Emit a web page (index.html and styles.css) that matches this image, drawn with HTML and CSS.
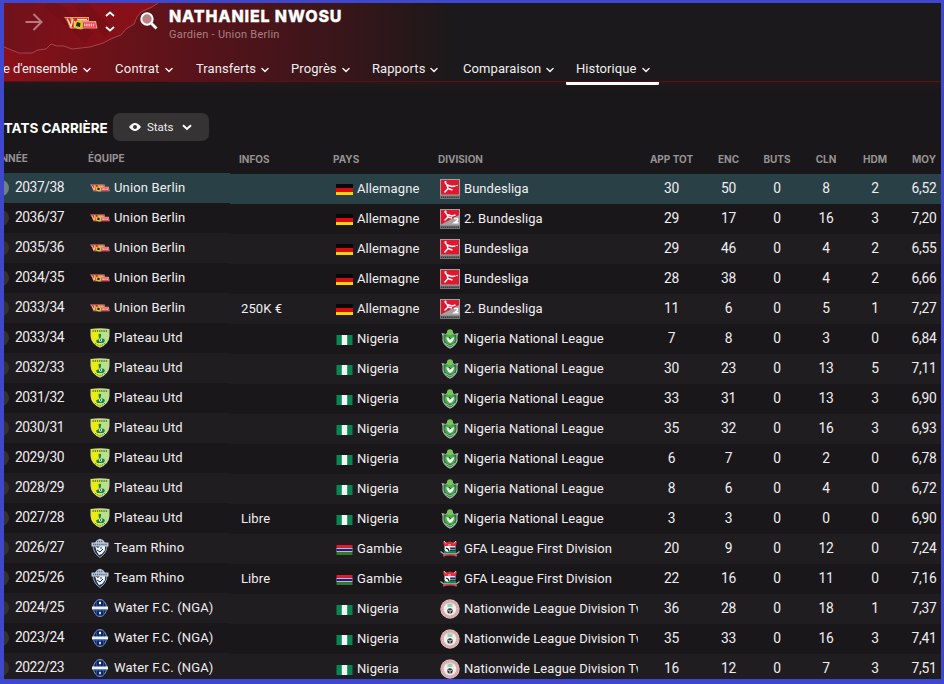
FILE: index.html
```
<!DOCTYPE html>
<html lang="fr">
<head>
<meta charset="utf-8">
<title>Nathaniel Nwosu</title>
<link rel="stylesheet" href="styles.css">
</head>
<body>
<svg class="defs" aria-hidden="true">
  <symbol id="chev" viewBox="0 0 8 6"><path d="M1 1.500 4 4.500 7 1.500" fill="none" stroke="currentColor" stroke-width="1.500" stroke-linecap="round"/></symbol>
  <symbol id="union" viewBox="0 0 34 16">
    <path d="M0 2H25V6H32L33.500 13.500H20L17 14.500 12 13.500H6L3 6Z" fill="#dba078"/>
    <path d="M1 3H6L7.500 8 9 3H24V5H15L11 12.500H6.500Z" fill="#dc2029"/>
    <path d="M3 3.500 7 11.500 9 4M10.500 6V12.500M13 4.500H23" stroke="#ffe6a0" stroke-width="1.500" fill="none"/>
    <circle cx="14.500" cy="9.500" r="4.200" fill="#d8cf21"/><path d="M13 7 16.500 8 16 12 12 11Z" fill="#26270d"/>
    <path d="M19 7.500H31L32 12.500H19Z" fill="#ef2a45"/><path d="M20 10H31" stroke="#ffc3cb" stroke-width="3" stroke-dasharray="1.500 .7"/>
  </symbol>
  <symbol id="plateau" viewBox="0 0 20 20">
    <path d="M.500 1Q10-.500 19.500 1V8Q19 16 10 19.700 1 16 .500 8Z" fill="#c9d4a0"/>
    <path d="M1.200 1.500H10V19Q2 16 1.200 8Z" fill="#ecea10"/>
    <path d="M10 1.500H18.800V8Q18 16 10 19Z" fill="#b9e08c"/>
    <path d="M2.500 3H18" stroke="#5c8430" stroke-width="1.800" stroke-dasharray="1.200 1"/>
    <path d="M8.500 6Q12 5 11 8L10.500 10 14 11Q16 13 13 15L7 15 6 12.500 9 11Z" fill="#118545"/>
    <circle cx="10.500" cy="12" r="1.700" fill="#fff"/><circle cx="10.500" cy="12" r=".8" fill="#111"/>
    <path d="M5 15.500 10 18 15 15.500" fill="none" stroke="#55772c" stroke-width="1" stroke-dasharray="1 1"/>
  </symbol>
  <symbol id="rhino" viewBox="0 0 20 20">
    <path d="M3 7H17Q17 15 10 19.500 3 15 3 7Z" fill="#1f3157" stroke="#a9b3bf" stroke-width=".9"/>
    <path d="M5 8 8 10 10 8 15 8 15 12 12 16 9 17 7 14Z" fill="#f4f7fa"/><path d="M7 12 10 14 13 11M11 9V11" stroke="#1b2c50" fill="none"/>
    <path d="M1.500 4.500H5L7 2 10 .700 13 2 15 4.500H18.500V8.500H1.500Z" fill="#bdcbd8"/><path d="M3 6.500H17M7 3.500H13" stroke="#536a86" stroke-width="1.300" stroke-dasharray="1.200 .7"/>
  </symbol>
  <symbol id="water" viewBox="0 0 20 20">
    <ellipse cx="10" cy="10" rx="6.500" ry="8.500" fill="#0d2254" stroke="#7c9bd9"/><path d="M10 2V18M6 4Q9 10 6 16M14 4Q11 10 14 16" stroke="#3059b2" fill="none"/>
    <circle cx="10" cy="5" r="1.200" fill="#fff"/><circle cx="10" cy="15" r="1.200" fill="#c5d5f5"/>
    <path d="M2 8.500H18V11.500H2Z" fill="#eef3f8"/><path d="M3 12H17" stroke="#4169b9"/>
  </symbol>
  <symbol id="bl" viewBox="0 0 20 20">
    <path d="M0 0H20V20H0Z" fill="#a3a1a2"/><path d="M1 1H19V15.500H1Z" fill="#e0182f"/>
    <path d="M5 3.500 7 6 12 7.500 15.500 7M7 6 8 9.500 4.500 13.500M8 9.500 12.500 11" fill="none" stroke="#fff" stroke-width="1.500"/><circle cx="5.500" cy="3" r="1.100" fill="#fff"/><circle cx="17" cy="6.500" r=".8" fill="#fff"/>
    <path d="M0 16.500H20V20H0Z" fill="#77797b"/><path d="M1 18.200H19" stroke="#333" stroke-width="1.500" stroke-dasharray="1.200 .7"/>
  </symbol>
  <symbol id="bl2" viewBox="0 0 20 20">
    <path d="M0 0H20V20H0Z" fill="#a3a1a2"/><path d="M1 1H19V6L1 15.500Z" fill="#e0182f"/>
    <path d="M5 3 7 5.500 12 7 15.500 6M7 5.500 8 8 4.500 11.500M8 8 12 9" fill="none" stroke="#fff" stroke-width="1.400"/><circle cx="5.500" cy="2.700" r="1.100" fill="#fff"/>
    <path d="M14 9.500H17.500V11.500L14.500 13.700H18.500" fill="none" stroke="#fff" stroke-width="1.600"/>
    <path d="M0 16.500H20V20H0Z" fill="#77797b"/><path d="M1 18.200H19" stroke="#333" stroke-width="1.500" stroke-dasharray="1.200 .7"/>
  </symbol>
  <symbol id="nnl" viewBox="0 0 20 20">
    <path d="M1.500 4 6 5 8 2H12L14 5 18.500 4 17.500 7V12Q16 17 10 19.700 4 17 2.500 12V7Z" fill="#b4bfb6"/>
    <path d="M3.500 5.500H16.500V11Q16 16 10 18.500 4 16 3.500 11Z" fill="#287b3b"/><circle cx="10" cy="10" r="5.300" fill="#4caa4c"/>
    <path d="M6.500 8 9 9 9.500 11 12 9 14 8Q14 13 10 14 6.500 12 6.500 8Z" fill="#eef9ee"/><path d="M9 8 11 10" stroke="#245a30"/><circle cx="10" cy="3.200" r="3" fill="#78c45a"/><path d="M5 14.500 10 17 15 14.500" fill="none" stroke="#b7dbb9" stroke-width=".8"/>
  </symbol>
  <symbol id="gfa" viewBox="0 0 20 20">
    <path d="M3 2.500 7 3.500 10 2.500 13 3.500 17 2.500 16 7H4Z" fill="#e12d3d"/><path d="M4 2 6 4.500M16 2 14 4.500M8 6H11" stroke="#f3c9cc"/><path d="M4.500 7H15.500V11H4.500Z" fill="#dce2e8"/><path d="M8 9.500H15.500" stroke="#242d67" stroke-width="2"/>
    <path d="M4 11.500H16V15H4Z" fill="#168255"/><circle cx="7.500" cy="10" r="2.700" fill="#fff"/><path d="M6 9 8 10 9 12" stroke="#111" stroke-width="1.200" fill="none"/>
    <path d="M.500 12.500 4 15H16L19.500 12.500" fill="none" stroke="#9fb5ab" stroke-width="1.300"/><path d="M3 17Q10 14.500 17 17" fill="none" stroke="#df3b4b" stroke-width="1.700"/>
  </symbol>
  <symbol id="nwl" viewBox="0 0 20 20">
    <circle cx="10" cy="10" r="9.700" fill="#d9c3c1"/><circle cx="10" cy="10" r="7.800" fill="none" stroke="#dba4a5" stroke-width="2.600" stroke-dasharray="1.600 .7"/><circle cx="10" cy="10" r="6.200" fill="#f0efed"/>
    <path d="M7.500 4.500H12.500V8H7.500Z" fill="#9fd0b5"/><circle cx="10" cy="12" r="2.700" fill="#333"/><path d="M8 11 10 12 12 11M10 12V15" stroke="#eee" stroke-width=".8" fill="none"/>
  </symbol>
  <symbol id="de" viewBox="0 0 17 12"><path d="M0 0H17V4H0Z" fill="#090909"/><path d="M0 4H17V8H0Z" fill="#dc0910"/><path d="M0 8H17V11H0Z" fill="#ffd008"/></symbol>
  <symbol id="ng" viewBox="0 0 17 12"><path d="M.500 1H16.500V11H.500Z" fill="#078653"/><path d="M5.800 1H11.200V11H5.800Z" fill="#f3f6f5"/></symbol>
  <symbol id="gm" viewBox="0 0 17 12"><path d="M.500 1H16.500V4.300H.500Z" fill="#d51f35"/><path d="M.500 4H16.500V8H.500Z" fill="#b9b8d5"/><path d="M.500 5H16.500V7H.500Z" fill="#1b2184"/><path d="M.500 8H16.500V11H.500Z" fill="#37772a"/></symbol>
</svg>
<div class="app">
  <header class="top">
    <svg class="crest-bg" viewBox="0 0 200 60">
      <defs><linearGradient id="g" x1="0" x2="1"><stop offset="0" stop-color="#6f121b"/><stop offset=".55" stop-color="#830f18"/><stop offset="1" stop-color="#8a1019"/></linearGradient></defs>
      <path d="M0 0H154L148 4 137 9 133 14 130 21 122 26 117 32 109 35 99 40 86 44 68 46 60 43 53 43 47 41 42 46 34 47 28 50 15 50 0 44Z" fill="url(#g)"/>
      <path d="M45 0 85 35M75 0 105 30" stroke="#620e18" stroke-opacity=".3" stroke-width="12"/>
      <path d="M154 0 148 4 137 9 133 14 130 21 122 26 117 32 109 35 99 40 86 44 68 46 60 43 53 43 47 41 42 46 34 47 28 50 15 50 0 44" fill="none" stroke="#b4575b" stroke-opacity=".75"/>
    </svg>
    <div class="bar">
      <svg class="arrow" viewBox="0 0 18 18"><path d="M.5 9H16M8.500 1 16.500 9 8.500 17" fill="none" stroke="#b77b7d" stroke-width="2"/></svg>
      <svg class="club"><use href="#union"/></svg>
      <svg class="updown" viewBox="0 0 10 21"><path d="M1 5 5 1.500 9 5M1 16 5 19.500 9 16" fill="none" stroke="#fff" stroke-width="1.800"/></svg>
      <svg class="search" viewBox="0 0 18 18"><circle cx="7" cy="7" r="5.700" fill="#b98184" stroke="#fff" stroke-width="2"/><path d="M11.500 11.500 16.500 16.500" stroke="#fff" stroke-width="2.800"/></svg>
      <div class="who"><h1>NATHANIEL NWOSU</h1><p>Gardien - Union Berlin</p></div>
    </div>
    <nav class="tabs">
      <a class="t1">e d'ensemble<svg><use href="#chev"/></svg></a>
      <a class="t2">Contrat<svg><use href="#chev"/></svg></a>
      <a class="t3">Transferts<svg><use href="#chev"/></svg></a>
      <a class="t4">Progrès<svg><use href="#chev"/></svg></a>
      <a class="t5">Rapports<svg><use href="#chev"/></svg></a>
      <a class="t6">Comparaison<svg><use href="#chev"/></svg></a>
      <a class="t7">Historique<svg><use href="#chev"/></svg></a>
    </nav>
  </header>
  <div class="section">
    <h2>STATS CARRIÈRE</h2>
    <button><svg class="eye" viewBox="0 0 12 8"><path d="M0 4Q6-4 12 4 6 12 0 4Z" fill="#fff"/><circle cx="6" cy="4" r="2" fill="#373436"/></svg><span>Stats</span><svg class="down" viewBox="0 0 10 7"><path d="M1 1.300 5 5 9 1.300" fill="none" stroke="#fff" stroke-width="2"/></svg></button>
  </div>
  <main class="table">
    <section class="left" id="left"><div class="lrow head"><span class="cut">ANNÉE</span><span>ÉQUIPE</span></div></section>
    <section class="right" id="right"><div class="rrow head"><span class="info">INFOS</span><span>PAYS</span><span class="div">DIVISION</span><b>APP TOT</b><b>ENC</b><b>BUTS</b><b>CLN</b><b>HDM</b><b>MOY</b></div></section>
  </main>
</div>
<script src="table.js"></script>
</body>
</html>
```
FILE: styles.css
```
* { box-sizing: border-box; }
body { margin: 0; width: 944px; height: 684px; overflow: hidden; background: #3f48cc; font-family: Roboto, "Liberation Sans", sans-serif; color: #f0eef0; }
h1, h2, p { margin: 0; }
.defs { position: absolute; width: 0; height: 0; }
.app { margin: 3px 3px 0 4px; width: 937px; height: 676px; overflow: hidden; background: #1a171a; }
.top { position: relative; height: 79px; background: linear-gradient(90deg, #8a1019 0, #701218 80px, #56131a 200px, #36161a 345px, #251719 410px, #1b191b 450px); border-bottom: 1px solid #541319; }
.crest-bg { position: absolute; left: 0; top: 0; width: 200px; height: 60px; }
.bar { position: relative; display: flex; height: 45px; align-items: flex-start; }
.arrow { width: 18px; height: 18px; margin: 10px 0 0 21px; }
.club { width: 34px; height: 16px; margin: 12px 0 0 21px; }
.updown { width: 10px; height: 21px; margin: 8px 0 0 7px; }
.search { width: 18px; height: 18px; margin: 9px 0 0 25px; }
.who { margin: 3px 0 0 11px; }
h1 { font: 800 16px/20px Inter, sans-serif; letter-spacing: .85px; color: #fff; white-space: nowrap; -webkit-text-stroke: .3px #fff; }
.who p { font-size: 11px; line-height: 16px; letter-spacing: .25px; margin-top: 1px; color: #aa7f81; }
.tabs { position: relative; display: flex; height: 37px; }
.tabs a { display: flex; align-items: center; height: 37px; padding-top: 4px; font-size: 13px; letter-spacing: .08px; white-space: nowrap; flex: none; }
.tabs svg { width: 8px; height: 6px; margin: 2px 0 0 5px; }
.tabs .t1 { width: 111px; margin-left: -1px; letter-spacing: -.1px; }
.tabs .t2 { width: 81px; letter-spacing: .25px; }
.tabs .t2 { margin-left: 1px; }
.t3 { width: 95px; }
.t4 { width: 81px; }
.t5 { width: 91px; }
.t6 { width: 103px; }
.tabs .t7 { width: 93px; padding-left: 10px; padding-top: 7px; border-bottom: 3px solid #fff; border-radius: 1px; }
.section { display: flex; height: 65px; padding-top: 31px; background: linear-gradient(#241719, #1a171a 8px); }
h2 { width: 109px; margin-left: -9px; font: 700 13.5px/31px Inter, sans-serif; letter-spacing: -.02px; color: #fff; white-space: nowrap; }
button { display: flex; align-items: center; margin-left: 9px; width: 96px; height: 28px; padding: 0 16px; border: 0; border-radius: 7px; background: #363335; color: #eee; font: 11.5px Roboto, sans-serif; }
.eye { width: 12px; height: 8px; }
button span { margin: 0 8px 0 6px; }
.down { width: 10px; height: 7px; }
.table { display: flex; }
.left { width: 226px; overflow: hidden; flex: none; }
.right { width: 711px; overflow: hidden; flex: none; padding-top: 1px; }
.lrow { display: grid; grid-template-columns: 84px 142px; height: 30px; align-items: center; }
.rrow { display: grid; width: 719px; grid-template-columns: 100px 106px 203px 65px 49px 48px 50px 48px 50px; height: 30px; align-items: center; }
.head { height: 26px; padding-bottom: 3px; font: 700 10px/23px Inter, sans-serif; color: #969395; }
.head.rrow span { padding-left: 3px; }
.head.rrow .div { padding-left: 2px; }
.head.rrow .info { padding-left: 9px; }
.head .cut { margin-left: -11px; }
.row { font-size: 13px; letter-spacing: .1px; white-space: nowrap; }
.row > * { padding-bottom: 2px; }
.row.odd { background: #201d20; }
.row.current { background: #294047; }
.rrow b { text-align: center; font-weight: 400; }
.head.rrow b { font-weight: 700; }
.row b { font-size: 13.8px; letter-spacing: -.25px; }
.year { display: flex; align-items: center; gap: 6px; font-size: 13.8px; letter-spacing: -.45px; margin-left: -11px; }
.year i { width: 16px; height: 16px; margin-top: 2px; border-radius: 50%; background: #343134; }
.current .year i { background: #718086; }
.cell { display: flex; align-items: center; overflow: hidden; height: 30px; }
.cell svg { flex: none; position: relative; top: 1px; }
.team { letter-spacing: .16px; }
.team svg { width: 20px; height: 20px; margin: 0 4px 0 2px; }
.info { padding-left: 11px; }
.nation svg { width: 17px; height: 12px; margin: 2px 4px 0 6px; }
.division { width: 202px; letter-spacing: .05px; }
.division svg { width: 20px; height: 20px; margin: 0 4px 0 4px; }
```
FILE: table.js
```
const seasons = [
  ["2037/38", "union", "Union Berlin", "", "de", "Allemagne", "bl", "Bundesliga", 30, 50, 0, 8, 2, "6,52"],
  ["2036/37", "union", "Union Berlin", "", "de", "Allemagne", "bl2", "2. Bundesliga", 29, 17, 0, 16, 3, "7,20"],
  ["2035/36", "union", "Union Berlin", "", "de", "Allemagne", "bl", "Bundesliga", 29, 46, 0, 4, 2, "6,55"],
  ["2034/35", "union", "Union Berlin", "", "de", "Allemagne", "bl", "Bundesliga", 28, 38, 0, 4, 2, "6,66"],
  ["2033/34", "union", "Union Berlin", "250K €", "de", "Allemagne", "bl2", "2. Bundesliga", 11, 6, 0, 5, 1, "7,27"],
  ["2033/34", "plateau", "Plateau Utd", "", "ng", "Nigeria", "nnl", "Nigeria National League", 7, 8, 0, 3, 0, "6,84"],
  ["2032/33", "plateau", "Plateau Utd", "", "ng", "Nigeria", "nnl", "Nigeria National League", 30, 23, 0, 13, 5, "7,11"],
  ["2031/32", "plateau", "Plateau Utd", "", "ng", "Nigeria", "nnl", "Nigeria National League", 33, 31, 0, 13, 3, "6,90"],
  ["2030/31", "plateau", "Plateau Utd", "", "ng", "Nigeria", "nnl", "Nigeria National League", 35, 32, 0, 16, 3, "6,93"],
  ["2029/30", "plateau", "Plateau Utd", "", "ng", "Nigeria", "nnl", "Nigeria National League", 6, 7, 0, 2, 0, "6,78"],
  ["2028/29", "plateau", "Plateau Utd", "", "ng", "Nigeria", "nnl", "Nigeria National League", 8, 6, 0, 4, 0, "6,72"],
  ["2027/28", "plateau", "Plateau Utd", "Libre", "ng", "Nigeria", "nnl", "Nigeria National League", 3, 3, 0, 0, 0, "6,90"],
  ["2026/27", "rhino", "Team Rhino", "", "gm", "Gambie", "gfa", "GFA League First Division", 20, 9, 0, 12, 0, "7,24"],
  ["2025/26", "rhino", "Team Rhino", "Libre", "gm", "Gambie", "gfa", "GFA League First Division", 22, 16, 0, 11, 0, "7,16"],
  ["2024/25", "water", "Water F.C. (NGA)", "", "ng", "Nigeria", "nwl", "Nationwide League Division Two", 36, 28, 0, 18, 1, "7,37"],
  ["2023/24", "water", "Water F.C. (NGA)", "", "ng", "Nigeria", "nwl", "Nationwide League Division Two", 35, 33, 0, 16, 3, "7,41"],
  ["2022/23", "water", "Water F.C. (NGA)", "", "ng", "Nigeria", "nwl", "Nationwide League Division Two", 16, 12, 0, 7, 3, "7,51"]
];
const icon = id => `<svg><use href="#${id}"/></svg>`;
let left = "", right = "";
seasons.forEach(([year, crest, team, info, flag, nation, logo, division, ...stats], i) => {
  const state = i === 0 ? "current" : i % 2 ? "" : "odd";
  left += `<div class="lrow row ${state}"><span class="year"><i></i>${year}</span><span class="cell team">${icon(crest)}${team}</span></div>`;
  right += `<div class="rrow row ${state}"><span class="info">${info}</span><span class="cell nation">${icon(flag)}${nation}</span><span class="cell division">${icon(logo)}${division}</span>${stats.map(n => `<b>${n}</b>`).join("")}</div>`;
});
document.getElementById("left").insertAdjacentHTML("beforeend", left);
document.getElementById("right").insertAdjacentHTML("beforeend", right);
```
